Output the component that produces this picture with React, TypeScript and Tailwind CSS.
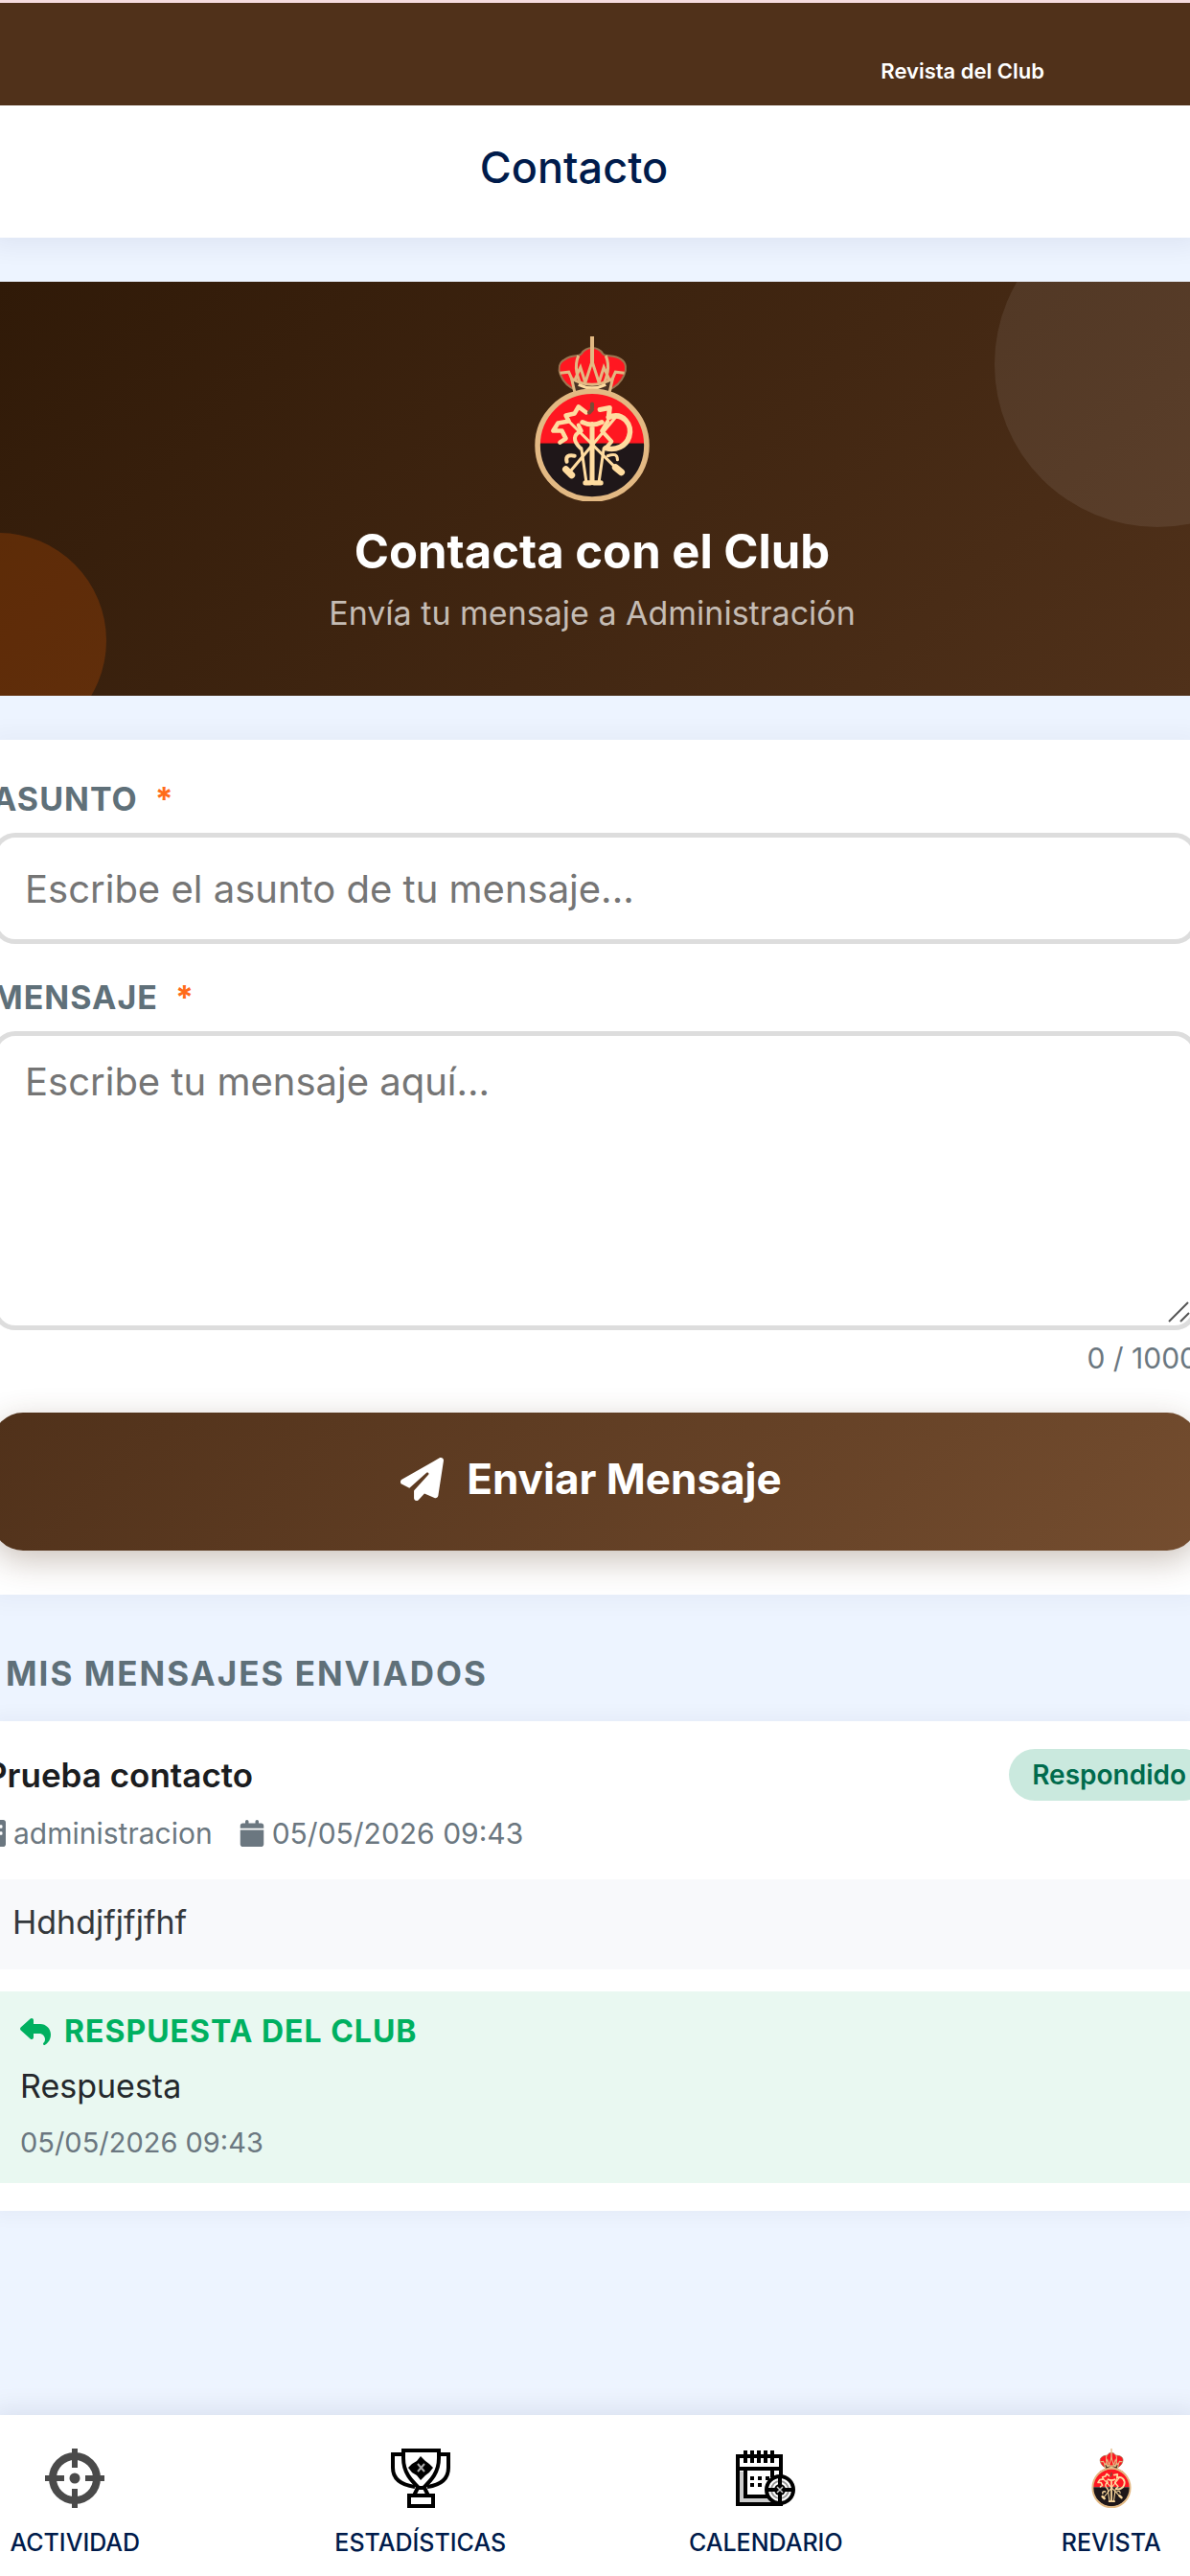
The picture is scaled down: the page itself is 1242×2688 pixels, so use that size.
import type { ReactNode } from 'react';
import { FaBuilding, FaCalendar, FaPaperPlane, FaReply } from 'react-icons/fa6';

const GOLD = '#e3b983';
const CREAM = '#ffdca0';

function ClubCrest({ className }: { className: string }) {
	return (
		<svg viewBox="0 0 120 171" preserveAspectRatio="none" className={className} aria-hidden="true">
			{/* crown */}
			<path
				d="M44 56 C28 50 20 30 32 24 C40 18 46 22 49 18 C54 10 66 10 71 18 C74 22 82 18 90 24 C100 31 92 50 76 56 Z"
				fill="#ff1721"
				stroke="#9c7550"
				strokeWidth="2"
			/>
			<path d="M60 0 V30" stroke={GOLD} strokeWidth="4" />
			<path
				d="M46 20 C41 32 45 42 49 52 M74 20 C79 32 75 42 71 52 M27 38 L36 37 L41 48 L48 32 L53 48 L60 26 L67 48 L72 32 L79 48 L84 37 L93 38"
				fill="none"
				stroke={GOLD}
				strokeWidth="3"
			/>
			<path d="M39 44 Q60 56 81 44 L77 62 H43 Z" fill="#4a3324" stroke={GOLD} strokeWidth="3" />
			<path d="M46 50 Q60 57 74 50" fill="none" stroke={CREAM} strokeWidth="3" />
			{/* shield */}
			<path d="M4 111 A56 56 0 0 1 116 111 Z" fill="#ff1721" />
			<path d="M4 111 A56 56 0 0 0 116 111 Z" fill="#1f1719" />
			<circle cx="60" cy="113" r="56" fill="none" stroke={GOLD} strokeWidth="5.5" />
			{/* monogram and crossed clubs */}
			<g fill="none" stroke={CREAM} strokeLinecap="round" strokeLinejoin="round">
				<path d="M50 89 Q60 94 70 89 M60 91 V151 M53 152 H58 M62 152 H69" strokeWidth="5" />
				<path d="M49 116 L54 151 M72 116 L67 151" strokeWidth="3" />
				<path d="M36 88 L88 140 M84 84 L36 142" strokeWidth="3" />
				<path d="M84 136 L90 141 M33 138 L39 144" strokeWidth="7" />
				<path d="M54 79 L46 73 L42 80 L33 82 L36 88 L25 90 L20 98 L29 98 L33 106 L27 110" strokeWidth="4.5" />
				<path d="M68 76 L78 74 L77 84" strokeWidth="5" />
				<path d="M77 84 C92 78 102 92 98 104 C95 114 84 119 74 116" strokeWidth="5.5" />
				<path d="M76 88 L70 98 L80 109 L74 116 M46 92 L49 98 Q36 104 48 116 M42 124 Q32 122 34 130" strokeWidth="4" />
				<path d="M76 124 Q86 120 86 128" strokeWidth="3" />
				<path d="M60 70 V74 M57 79 L60 76" stroke="#7a4b35" strokeWidth="4" />
			</g>
		</svg>
	);
}

function CrosshairIcon() {
	return (
		<svg viewBox="0 0 62 62" className="size-[62px]" fill="none" stroke="#4a4a4a" aria-hidden="true">
			<circle cx="31" cy="31" r="23" strokeWidth="8" />
			<path d="M31 0 V20 M31 42 V62 M0 31 H20 M42 31 H62" strokeWidth="6" />
			<circle cx="31" cy="31" r="5.5" fill="#4a4a4a" stroke="none" />
		</svg>
	);
}

function TrophyIcon() {
	return (
		<svg viewBox="0 0 62 62" className="size-[62px]" fill="none" stroke="#000" strokeWidth="4" aria-hidden="true">
			<path d="M13 2 H50 V10 C50 25 42 33 34 41 H29 C21 33 13 25 13 10 Z" />
			<path d="M13 6 H2 V20 C2 32 11 38 25 40 M50 6 H60 V20 C60 32 52 38 38 40" />
			<path d="M28 41 L24 49 H39 L35 41 M19 49 H44 V60 H19 Z" />
			<path d="M31 8 L36 13 L40 16 L44 20 L40 25 L36 28 L31 33 L27 28 L22 25 L18 20 L22 16 L27 13 Z" fill="#000" stroke="none" />
			<path d="M28 16 L35 24 M35 16 L28 24" stroke="#aaa" strokeWidth="2" />
		</svg>
	);
}

function ScheduleIcon() {
	return (
		<svg viewBox="0 0 62 62" className="size-[62px]" fill="none" stroke="#000" strokeWidth="4" aria-hidden="true">
			<path d="M2 8 H47 V58 H2 Z" fill="#fff" />
			<path d="M4 24 H9 V52 H40 V56 H4 Z" fill="#ccc" stroke="none" />
			<path d="M2 21 H47 M10 21 V50 H40 M38 21 V30" />
			<path d="M10 2 V15 M17 2 V15 M24 2 V15 M31 2 V15 M38 2 V15" />
			<path d="M15 31 H35 M15 38 H31" strokeWidth="4" strokeDasharray="4 4" />
			<circle cx="46" cy="43" r="14" fill="#fff" strokeWidth="4" />
			<circle cx="46" cy="43" r="9" stroke="#999" strokeWidth="2" />
			<path d="M46 29 V57 M32 43 H60" strokeWidth="4" />
			<circle cx="46" cy="43" r="6" fill="#000" stroke="none" />
			<path d="M43 40 L49 46 M49 40 L43 46" stroke="#ccc" strokeWidth="1.5" />
		</svg>
	);
}

type NavItem = { label: string; icon: ReactNode };

const navItems: NavItem[] = [
	{ label: 'Actividad', icon: <CrosshairIcon /> },
	{ label: 'Estadísticas', icon: <TrophyIcon /> },
	{ label: 'Calendario', icon: <ScheduleIcon /> },
	{ label: 'Revista', icon: <ClubCrest className="h-[62px] w-[42px]" /> },
];

function FieldLabel({ htmlFor, children }: { htmlFor: string; children: ReactNode }) {
	return (
		<label
			htmlFor={htmlFor}
			className="flex gap-[18px] text-[34px] font-bold uppercase leading-[48px] tracking-[1px] text-[#5f7079]"
		>
			{children}
			<span className="text-[#ff6b1a]">*</span>
		</label>
	);
}

function Hero() {
	return (
		<section className="relative mt-[46px] flex flex-col items-center overflow-hidden bg-linear-135 from-[#301a08] to-[#50311a] pb-[60px] pr-1.5 pt-[57px]">
			<div className="absolute -right-[136px] -top-[84px] size-[340px] rounded-full bg-white/8" />
			<div className="absolute -bottom-[55px] -left-[114px] size-[225px] rounded-full bg-[#ff6600]/20" />
			<ClubCrest className="h-[172px] w-[122px]" />
			<h2 className="relative mt-[19px] text-[49px] font-bold leading-[68px] text-white">Contacta con el Club</h2>
			<p className="relative mt-1 text-[34px] leading-[52px] text-[#c5bcb4]">Envía tu mensaje a Administración</p>
		</section>
	);
}

function ContactForm() {
	return (
		<form className="mt-[46px] overflow-hidden bg-white pb-[46px] pt-[38px] shadow-[0_0_20px_10px_rgba(0,20,60,0.03)]">
			<div className="-mx-2">
				<FieldLabel htmlFor="asunto">Asunto</FieldLabel>
				<input
					id="asunto"
					type="text"
					placeholder="Escribe el asunto de tu mensaje..."
					className="mt-[11px] block h-[116px] w-full rounded-[24px] border-[5px] border-[#dddddd] px-[29px] text-[40px] placeholder:text-[#757575]"
				/>
				<div className="mt-8">
					<FieldLabel htmlFor="mensaje">Mensaje</FieldLabel>
				</div>
				<div className="relative mt-[11px]">
					<textarea
						id="mensaje"
						maxLength={1000}
						placeholder="Escribe tu mensaje aquí..."
						className="block h-[312px] w-full resize-none rounded-[24px] border-[5px] border-[#dddddd] px-[29px] py-[18px] text-[40px] leading-[60px] placeholder:text-[#757575]"
					/>
					{/* resize grip */}
					<svg
						viewBox="0 0 24 22"
						className="absolute bottom-2 right-2 h-[22px] w-[24px]"
						stroke="#555"
						strokeWidth="2"
						aria-hidden="true"
					>
						<path d="M2 21 L22 1 M14 21 L23 12" />
					</svg>
				</div>
				<p className="mt-[5px] text-right text-[30px] leading-[48px] text-[#6b7780]">0 / 1000</p>
				<button
					type="button"
					className="mt-[33px] flex h-[144px] w-full items-center justify-center gap-6 rounded-[32px] bg-linear-135 from-[#50311a] to-[#744d2f] pb-1.5 pr-2 text-[44px] font-bold text-white shadow-[0_10px_34px_rgba(80,49,26,0.3)]"
				>
					<FaPaperPlane className="size-[45px]" />
					Enviar Mensaje
				</button>
			</div>
		</form>
	);
}

function SentMessage() {
	return (
		<article className="overflow-hidden bg-white pb-[29px] pt-[29px] shadow-[0_0_16px_8px_rgba(0,20,60,0.03)]">
			<div className="-ml-[15px] -mr-5">
				<div className="flex items-center justify-between">
					<h4 className="text-[35px] font-semibold leading-[52px] text-[#1b1d20]">Prueba contacto</h4>
					<span className="rounded-full bg-[#cae9de] px-6 text-[28px] font-semibold leading-[54px] text-[#006b4d]">
						Respondido
					</span>
				</div>
				<div className="mt-2 flex gap-7 text-[30px] leading-[52px] text-[#6b7780]">
					<span className="flex items-center gap-2">
						<FaBuilding className="h-[28px] w-[21px]" />
						administracion
					</span>
					<span className="flex items-center gap-2">
						<FaCalendar className="h-[28px] w-[26px]" />
						05/05/2026 09:43
					</span>
				</div>
				<p className="mt-[22px] bg-[#f8f9fb] px-7 pb-[22px] pt-[18px] text-[34px] leading-[54px] text-[#34383c]">
					Hdhdjfjfjfhf
				</p>
				<div className="mt-[23px] bg-[#e9f8f1] px-9 py-[18px]">
					<h5 className="flex items-center gap-[14px] text-[32px] font-bold uppercase leading-[48px] tracking-[1px] text-[#00b060]">
						<FaReply className="size-[32px]" />
						Respuesta del Club
					</h5>
					<p className="mt-1.5 text-[34px] leading-[54px] text-[#24282c]">Respuesta</p>
					<p className="mt-2 text-[29px] leading-[48px] text-[#6b7780]">05/05/2026 09:43</p>
				</div>
			</div>
		</article>
	);
}

function BottomNav() {
	return (
		<nav className="relative overflow-hidden bg-white shadow-[0_0_24px_8px_rgba(0,20,60,0.07)]">
			<ul className="-ml-[102px] -mr-[98px] grid grid-cols-4 pb-[15px] pt-[35px]">
				{navItems.map((item) => (
					<li key={item.label}>
						<a href="#" className="flex flex-col items-center text-[25px] font-medium uppercase text-[#001b4b]">
							{item.icon}
							<span className="mt-4 leading-[40px]">{item.label}</span>
						</a>
					</li>
				))}
			</ul>
		</nav>
	);
}

export default function App() {
	return (
		<div className="flex min-h-screen flex-col overflow-hidden bg-[#edf4ff] font-[Inter,sans-serif]">
			<header className="relative bg-white shadow-[0_0_24px_10px_rgba(0,20,60,0.06)]">
				<div className="flex justify-end border-t-[3px] border-[#f6dcdf] bg-[#50311a] pb-[20px] pr-[152px] pt-[55px]">
					<a href="#" className="text-[22px] font-semibold leading-[32px] text-white">
						Revista del Club
					</a>
				</div>
				<h1 className="pb-[41px] pr-[44px] pt-[33px] text-center text-[45px] font-medium leading-[64px] text-[#001b4b]">
					Contacto
				</h1>
			</header>
			<main className="flex-1">
				<Hero />
				<ContactForm />
				<section className="mt-[54px]">
					<h3 className="px-1.5 text-[35px] font-bold uppercase leading-[56px] tracking-[2px] text-[#5f7079]">
						Mis mensajes enviados
					</h3>
					<div className="mt-[22px]">
						<SentMessage />
					</div>
				</section>
			</main>
			<BottomNav />
		</div>
	);
}
